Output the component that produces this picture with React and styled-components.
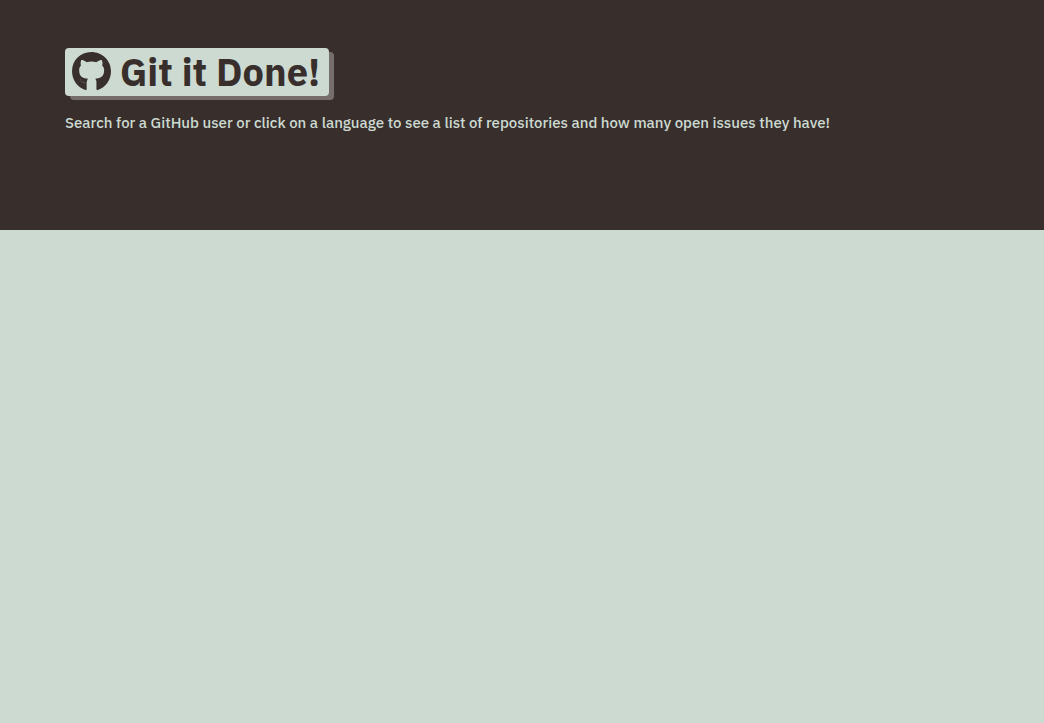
import React from "react";
import styled, { createGlobalStyle } from "styled-components";

const GlobalStyle = createGlobalStyle`
  * { box-sizing: border-box; }
  body {
    margin: 0;
    background: #cddad1;
    color: #382f2d;
    font-family: "IBM Plex Sans", Roboto, "Liberation Sans", sans-serif;
  }
`;

const Page = styled.div`
  min-height: 100vh;
  display: flex;
  flex-direction: column;
`;

const Hero = styled.header`
  min-height: 230px;
  padding: 48px 65px;
  background: #382f2d;
  color: #cddad1;
`;

const Title = styled.h1`
  display: flex;
  align-items: center;
  gap: 9px;
  width: fit-content;
  height: 48px;
  margin: 0;
  padding: 0 9px 0 7px;
  border-radius: 4px;
  background: #cddad1;
  box-shadow: 5px 4px 0 #756e6c;
  color: #382f2d;
  font-size: 38px;
  font-weight: 700;
  line-height: 48px;
  white-space: nowrap;
`;

const Logo = styled.svg`
  flex: none;
  width: 39px;
  height: 38px;
  margin-bottom: 2px;
  fill: currentColor;
`;

const Intro = styled.p`
  margin: 15px 0 0;
  font-size: 15px;
  font-weight: 500;
  line-height: 24px;
`;

export default function App() {
  return (
    <Page>
      <GlobalStyle />
      <Hero>
        <Title>
          <Logo viewBox="0 8 496 484" aria-hidden="true">
            <path d="M244.8 8C106.1 8 0 113.3 0 252c0 110.9 69.8 205.8 169.5 239.2 12.8 2.3 17.3-5.6 17.3-12.1 0-6.2-.3-40.4-.3-61.4 0-31 5-57 16.6-68.8-55.9-6.2-112.3-14.3-112.3-110.5 0-27.5 7.6-41.3 23.6-58.9-2.6-6.5-11.1-33.3 2.6-67.9 20.9-6.5 69 27 69 27 20-5.6 41.5-8.5 62.8-8.5s42.8 2.9 62.8 8.5c0 0 48.1-33.6 69-27 13.7 34.7 5.2 61.4 2.6 67.9 16 17.7 25.8 31.5 25.8 58.9 0 96.5-58.9 104.2-114.8 110.5 9.2 7.9 17 22.9 17 46.4 0 33.7-.3 75.4-.3 83.6 0 6.5 4.6 14.4 17.3 12.1C428.2 457.8 496 362.9 496 252 496 113.3 383.5 8 244.8 8z" />
            <path
              d="M104 358l7 5M116 374l9 11M134 394l12 5M156 401h10M174 400h8"
              fill="none"
              stroke="#cddad1"
              strokeWidth="5"
            />
          </Logo>
          Git it Done!
        </Title>
        <Intro>
          Search for a GitHub user or click on a language to see a list of
          repositories and how many open issues they have!
        </Intro>
      </Hero>
      <main />
    </Page>
  );
}
